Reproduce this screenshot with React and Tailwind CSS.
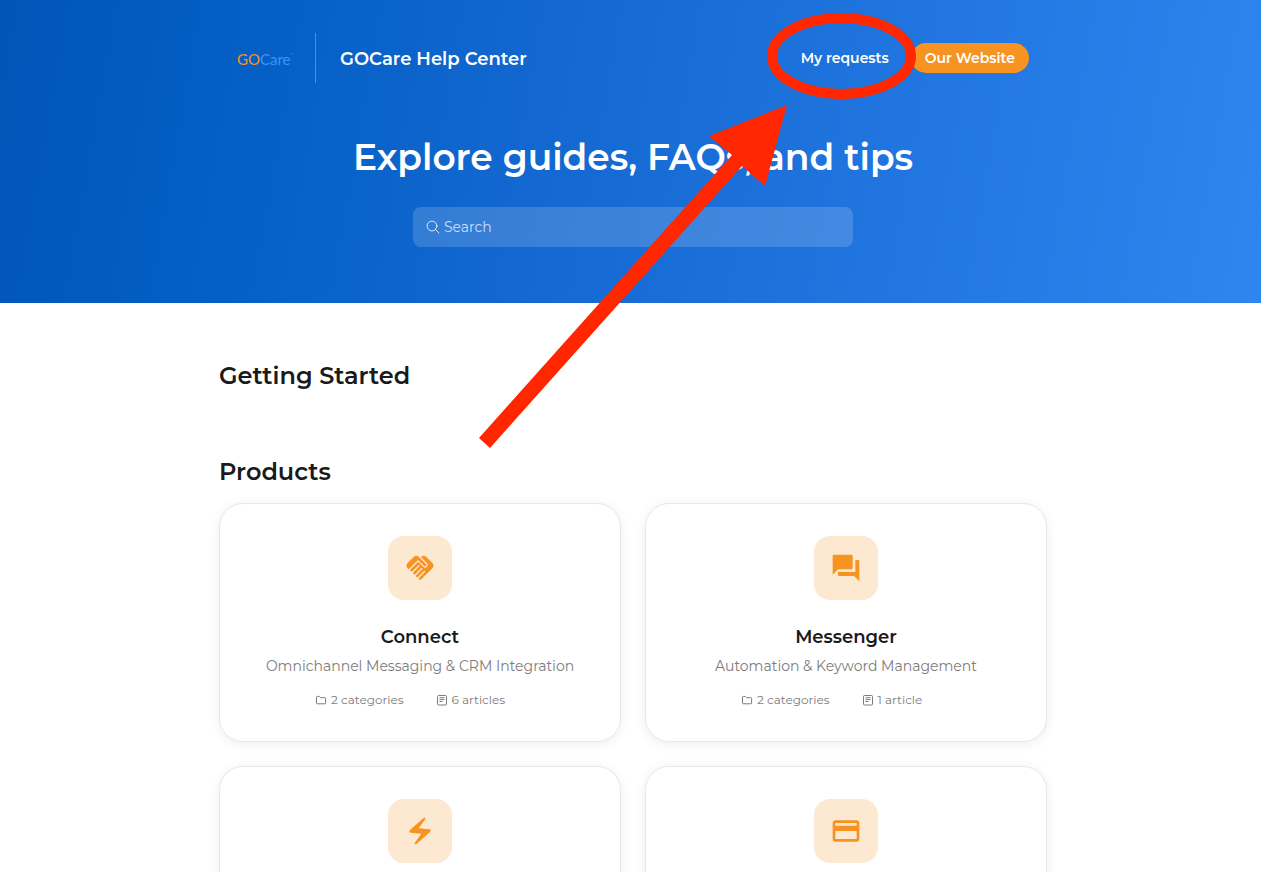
import { MdHandshake, MdQuestionAnswer, MdElectricBolt, MdCreditCard } from "react-icons/md";

const products = [
  { name: "Connect", text: "Omnichannel Messaging & CRM Integration", categories: "2 categories", articles: "6 articles", Icon: MdHandshake },
  { name: "Messenger", text: "Automation & Keyword Management", categories: "2 categories", articles: "1 article", Icon: MdQuestionAnswer },
  { name: "", text: "", categories: "", articles: "", Icon: MdElectricBolt },
  { name: "", text: "", categories: "", articles: "", Icon: MdCreditCard },
];

function SearchIcon() {
  return (
    <svg viewBox="0 0 14 14" className="size-3.5 shrink-0" fill="none" stroke="currentColor" strokeLinecap="round" aria-hidden="true">
      <circle cx="6" cy="6" r="4.9" />
      <path d="M9.6 9.6 13 13" />
    </svg>
  );
}

function FolderIcon() {
  return (
    <svg viewBox="0 0 12 12" className="size-3 shrink-0" fill="none" stroke="currentColor" strokeLinejoin="round" aria-hidden="true">
      <path d="M1.5 3.2Q1.5 2.4 2.3 2.4H4.3L5.6 3.7H9.8Q10.6 3.7 10.6 4.5V9Q10.6 9.8 9.8 9.8H2.3Q1.5 9.8 1.5 9Z" />
    </svg>
  );
}

function ArticleIcon() {
  return (
    <svg viewBox="0 0 12 12" className="size-3 shrink-0" fill="none" stroke="currentColor" strokeLinejoin="round" aria-hidden="true">
      <rect x="1.5" y="1.5" width="9" height="9.5" rx="1" />
      <path d="M3.5 3.7H8.5M3.5 5.6H8.5M3.5 7.5H6.5" />
    </svg>
  );
}

function ProductCard({ product }) {
  const { name, text, categories, articles, Icon } = product;
  return (
    <article className="flex min-h-[239px] flex-col items-center rounded-3xl border border-[#e8e8e8] bg-white px-6 pt-8 shadow-[0_2px_12px_rgba(0,0,0,0.07)]">
      <div className="flex size-16 items-center justify-center rounded-2xl bg-[#fde8d1]">
        <Icon className="size-8 text-[#f79320]" aria-hidden="true" />
      </div>
      {name && (
        <>
          <h3 className="mt-6 text-lg leading-[26px] font-semibold text-[#1a1a1a]">{name}</h3>
          <p className="mt-1.5 text-center text-sm leading-5 text-[#7c7c7c]">{text}</p>
          <div className="mt-3.5 flex w-[210px] gap-8 text-xs leading-5 text-[#7c7c7c]">
            <span className="flex items-center gap-1 whitespace-nowrap"><FolderIcon />{categories}</span>
            <span className="flex items-center gap-1 whitespace-nowrap"><ArticleIcon />{articles}</span>
          </div>
        </>
      )}
    </article>
  );
}

function Annotation() {
  return (
    <svg viewBox="0 0 440 440" className="pointer-events-none absolute top-2.5 left-[259px] w-[440px]" aria-hidden="true">
      <ellipse cx="363.5" cy="46" rx="69.5" ry="38" fill="none" stroke="#ff2600" strokeWidth="10" />
      <path d="M309 95 287 176 264 156 12 438 1 428 254 145 231 126Z" fill="#ff2600" />
    </svg>
  );
}

export default function App() {
  return (
    <div className="h-screen overflow-hidden bg-white font-[Montserrat,Inter,sans-serif] text-[#1a1a1a]">
      <header className="bg-linear-[100deg,#0055b8_0%,#0560c6_22%,#166ad3_48%,#2277e2_74%,#2f86ee_100%] pb-14 pl-[5px] text-white">
        <div className="relative mx-auto max-w-[828px]">
          <nav className="flex items-center justify-between px-[18px] pt-[33px]" aria-label="Main">
            <a href="#home" className="flex items-center">
              <span className="flex w-[54px] items-start pt-0.5 font-[Lato] text-[15px] leading-5">
                <span className="text-[#f79320]">GO</span>
                <span className="text-[#3b93f7]">Care</span>
                <span className="text-[4px] leading-3 text-[#3b93f7]">™</span>
              </span>
              <span className="mx-6 h-[50px] w-px bg-white/30" />
              <span className="pt-0.5 text-lg font-semibold">GOCare Help Center</span>
            </a>
            <div className="flex items-center gap-[22px] text-sm leading-5 font-semibold">
              <a href="#requests">My requests</a>
              <a href="#website" className="rounded-full bg-[#f79320] px-3.5 py-[5px]">Our Website</a>
            </div>
          </nav>
          <h1 className="mt-[50px] text-center text-4xl leading-12 font-semibold">Explore guides, FAQs, and tips</h1>
          <label className="mx-auto mt-[26px] flex h-10 max-w-[440px] items-center gap-1 rounded-lg bg-white/16 px-[13px] text-white/80">
            <SearchIcon />
            <input type="search" aria-label="Search" placeholder="Search" className="min-w-0 flex-1 bg-transparent text-sm outline-none placeholder:text-white/75" />
          </label>
          <Annotation />
        </div>
      </header>
      <main className="pl-[5px]">
        <div className="mx-auto max-w-[828px] pt-[57px]">
          <h2 className="text-2xl font-semibold">Getting Started</h2>
          <h2 className="mt-16 text-2xl font-semibold">Products</h2>
          <section className="mt-[15px] grid grid-cols-2 gap-6" aria-label="Products">
            {products.map((product, i) => <ProductCard key={i} product={product} />)}
          </section>
        </div>
      </main>
    </div>
  );
}
